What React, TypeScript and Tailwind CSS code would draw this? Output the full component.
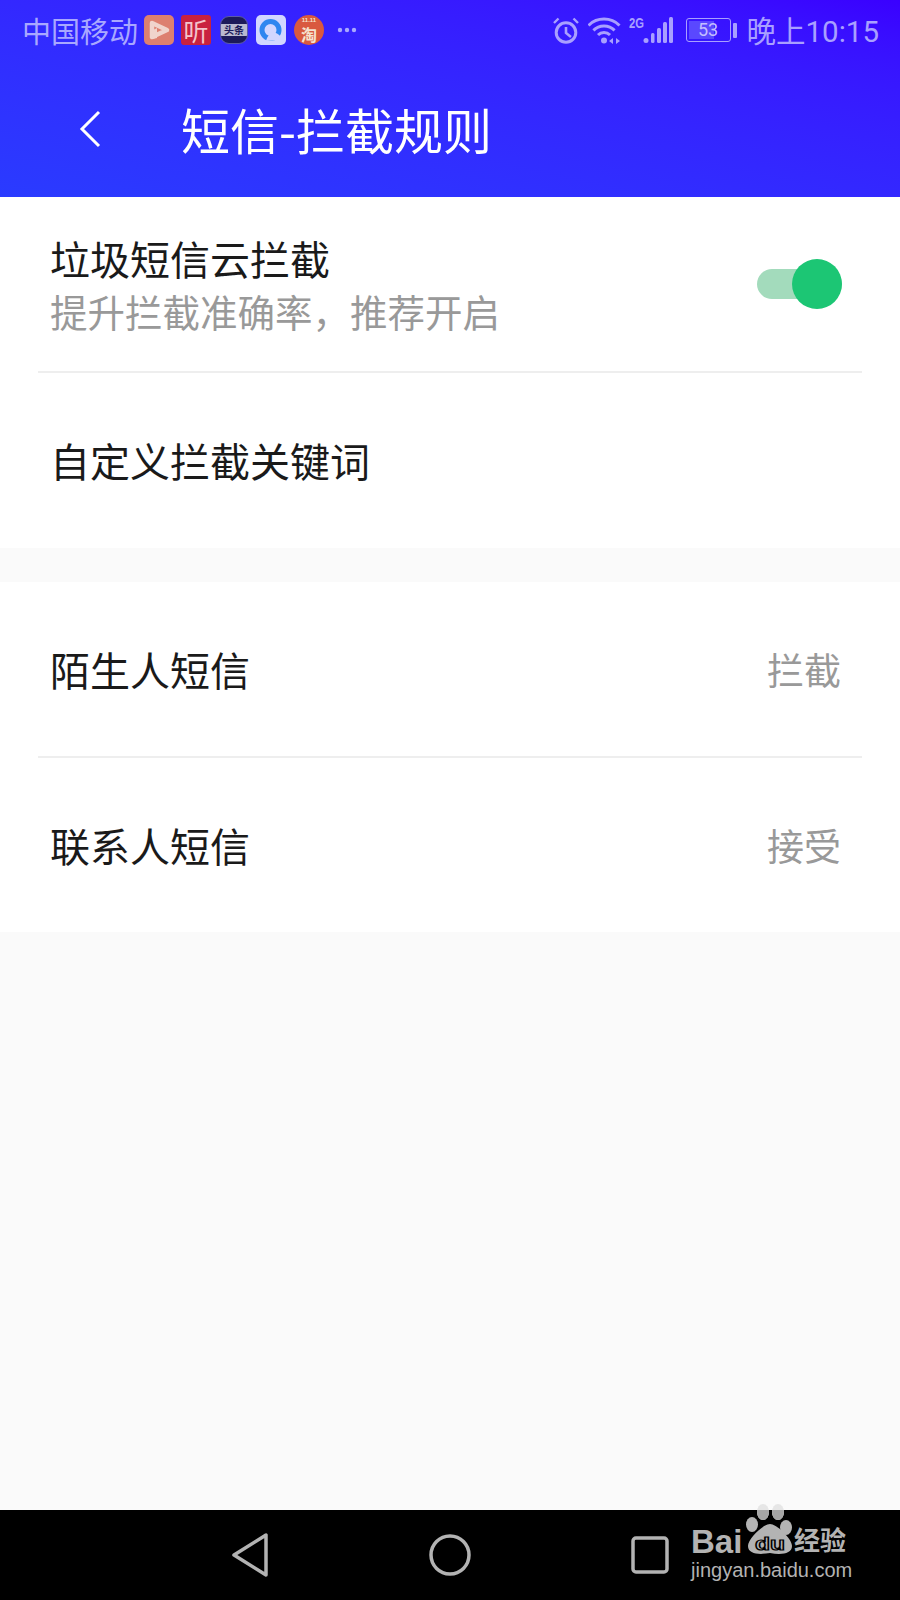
import React from "react";

const cjk = "font-['Noto_Sans_CJK_SC','Noto_Sans',sans-serif]";

function Row({ title, value, tall }: { title: string; value?: string; tall?: boolean }) {
  return (
    <div className={`flex items-center justify-between pl-[50px] pr-[59px] ${tall ? "h-[175px] pb-[2px]" : "h-[174px]"}`}>
      <span className="text-[40px] leading-[48px] text-[#1a1a1a]">{title}</span>
      {value && <span className="text-[37px] leading-[48px] text-[#999999]">{value}</span>}
    </div>
  );
}

function Divider() {
  return <div className="mx-[38px] h-[2px] bg-[#eeeeee]" />;
}

function StatusLeft() {
  const c = "#a9a8ff";
  return (
    <div className="flex items-center">
      <span className="text-[29px] leading-[40px] text-[#a9a8ff]">中国移动</span>
      <div className="ml-[6px] flex h-[30px] w-[30px] items-center justify-center rounded-[5px] bg-[#dd8070]">
        <svg width="30" height="30" viewBox="0 0 30 30" fill="none">
          <path d="M8 8 L23 15 L8 22 Z" stroke="#f0d4cc" strokeWidth="4.5" strokeLinejoin="round" />
          <path d="M9 15 L13 13 V23 L9 24 Z" fill="#f0d4cc" />
        </svg>
      </div>
      <div className="ml-[7px] flex h-[30px] w-[30px] items-center justify-center rounded-[3px] bg-[#c9213f] text-[25px] leading-[30px] text-[#f3c4cc]">听</div>
      <div className="ml-[9px] flex h-[28px] w-[28px] items-center justify-center overflow-hidden rounded-[9px] border border-[#5b5ba8] bg-[#1c1a5a]">
        <div className="flex h-[12px] w-full items-center justify-center bg-[#b9b9cf] text-[10px] font-bold leading-[12px] text-[#1c1a5a]">头条</div>
      </div>
      <div className="ml-[8px] flex h-[30px] w-[30px] items-center justify-center rounded-[5px] bg-[#d2d6ff]">
        <svg width="30" height="30" viewBox="0 0 30 30" fill="none">
          <circle cx="14.5" cy="15" r="8.5" stroke="#2f86f0" strokeWidth="5" />
          <path d="M10 26 C13 16 20 14 27 25 Z" fill="#d2d6ff" />
        </svg>
      </div>
      <div className="ml-[8px] flex h-[30px] w-[30px] flex-col items-center justify-center rounded-full bg-[#d9593f] text-[#f5e3d0]">
        <span className="font-['Liberation_Sans',sans-serif] text-[6px] font-bold leading-[8px]">11.11</span>
        <span className="text-[16px] font-bold leading-[20px]">淘</span>
      </div>
      <svg className="ml-[13px]" width="20" height="6" viewBox="0 0 20 6">
        <circle cx="3" cy="3" r="2.2" fill={c} />
        <circle cx="10" cy="3" r="2.2" fill={c} />
        <circle cx="17" cy="3" r="2.2" fill={c} />
      </svg>
    </div>
  );
}

function StatusRight() {
  const c = "#a9a0ff";
  return (
    <div className="flex items-center">
      <svg width="26" height="27" viewBox="0 0 26 27" fill="none" stroke={c}>
        <circle cx="13" cy="15.5" r="9.8" strokeWidth="3" />
        <path d="M13 10 V16 L18 20" strokeWidth="2.6" />
        <path d="M1 6 L5.5 1.5 M25 6 L20.5 1.5" strokeWidth="2.4" />
      </svg>
      <svg className="ml-[9px]" width="33" height="27" viewBox="0 0 33 27" fill="none" stroke={c}>
        <path d="M0.5 8.5 A22 22 0 0 1 31.5 8.5" strokeWidth="3" />
        <path d="M5.4 13.4 A15 15 0 0 1 26.6 13.4" strokeWidth="3" />
        <path d="M10 18 A8.5 8.5 0 0 1 22 18" strokeWidth="3" />
        <circle cx="16" cy="23.5" r="3" fill={c} stroke="none" />
        <path d="M21 24 L25 21 V27 Z M28 21 L32 24 L28 27 Z" fill={c} stroke="none" />
      </svg>
      <svg className="ml-[8px]" width="44" height="34" viewBox="0 -4 44 34" fill={c}>
        <text x="0" y="11" fontSize="15" fontWeight="700" fontFamily="Liberation Sans" textLength="15" lengthAdjust="spacingAndGlyphs">2G</text>
        <circle cx="17" cy="23.5" r="2.5" />
        <rect x="22" y="16" width="3.5" height="10" rx="1.5" />
        <rect x="28" y="11" width="4" height="15" rx="1.5" />
        <rect x="34" y="5" width="4" height="21" rx="1.5" />
        <rect x="40" y="0" width="4" height="26" rx="1.5" />
      </svg>
      <div className="ml-[13px] flex h-[24px] w-[45px] items-center justify-center rounded-[3px] border border-[#a9a0ff] bg-[linear-gradient(90deg,#5a48ff_62%,transparent_62%)] bg-clip-content p-[2px]">
        <span className="font-['Roboto',sans-serif] text-[18px] leading-[18px] text-[#c4beff]">53</span>
      </div>
      <div className="ml-[2px] h-[15px] w-[4px] rounded-[1px] bg-[#a9a0ff]" />
      <span className="ml-[10px] text-[29.5px] leading-[40px] text-[#a9a0ff]">
        晚上<span className="font-['Roboto',sans-serif]">10:15</span>
      </span>
    </div>
  );
}

function Baidu() {
  return (
    <div className="absolute left-[691px] top-[1503px] flex w-[170px] flex-col items-start text-[#b3b3b3]">
      <div className="flex h-[52px] items-end">
        <span className="mb-[-3px] w-[51px] font-['Liberation_Sans',sans-serif] text-[33px] font-bold leading-[32px]">Bai</span>
        <svg className="ml-[4px]" width="47" height="52" viewBox="0 0 47 52">
          <defs>
            <clipPath id="navPart">
              <rect x="0" y="7" width="47" height="45" />
            </clipPath>
          </defs>
          <ellipse cx="17" cy="9" rx="6" ry="8" fill="#e6e6e6" />
          <ellipse cx="32" cy="9" rx="6" ry="8" fill="#e6e6e6" />
          <g clipPath="url(#navPart)" fill="#a6a6a6">
            <ellipse cx="17" cy="9" rx="6" ry="8" />
            <ellipse cx="32" cy="9" rx="6" ry="8" />
          </g>
          <ellipse cx="6" cy="21.5" rx="6" ry="7.5" fill="#b3b3b3" />
          <ellipse cx="40" cy="24.5" rx="6" ry="7.5" fill="#b3b3b3" />
          <path d="M24 21 C31 21 46 36 46 43 C46 51 35 52 24 50 C13 52 2 51 2 43 C2 36 17 21 24 21 Z" fill="#b3b3b3" />
          <text x="9" y="47" fontSize="18" fontWeight="700" fontFamily="Liberation Sans" textLength="30" lengthAdjust="spacingAndGlyphs" fill="#b3b3b3" stroke="#000" strokeWidth="1.2">du</text>
        </svg>
        <span className="ml-[1px] mb-[0px] text-[26px] font-bold leading-[32px]">经验</span>
      </div>
      <span className="mt-[3px] font-['Liberation_Sans',sans-serif] text-[20px] leading-[24px]">jingyan.baidu.com</span>
    </div>
  );
}

export default function App() {
  return (
    <div className={`relative flex h-[1600px] w-[900px] flex-col overflow-hidden bg-[#fafafa] ${cjk}`}>
      <header className="flex h-[197px] shrink-0 flex-col bg-gradient-to-tr from-[#2a3bff] to-[#3a00ff] pl-[22px] pr-[21px]">
        <div className="flex h-[60px] items-center justify-between">
          <StatusLeft />
          <StatusRight />
        </div>
        <div className="flex flex-1 items-center">
          <svg className="ml-[56px]" width="24" height="40" viewBox="0 0 24 40" fill="none" stroke="#ffffff" strokeWidth="3">
            <path d="M21 3 L4 20 L21 37" />
          </svg>
          <h1 className="ml-[79px] text-[49px] font-normal leading-[56px] text-white">短信-拦截规则</h1>
        </div>
      </header>

      <section className="bg-white">
        <div className="flex h-[174px] items-center justify-between pl-[50px] pr-[58px]">
          <div className="flex flex-col gap-[3px]">
            <span className="text-[40px] leading-[50px] text-[#1a1a1a]">垃圾短信云拦截</span>
            <span className="text-[37.5px] leading-[50px] text-[#999999]">提升拦截准确率，推荐开启</span>
          </div>
          <div className="relative h-[30px] w-[85px] rounded-full bg-[#a3dbbc]">
            <div className="absolute right-0 top-[-10px] h-[50px] w-[50px] rounded-full bg-[#1cc674]" />
          </div>
        </div>
        <Divider />
        <Row title="自定义拦截关键词" tall />
      </section>

      <section className="mt-[34px] bg-white">
        <Row title="陌生人短信" value="拦截" />
        <Divider />
        <Row title="联系人短信" value="接受" />
      </section>

      <div className="flex-1" />

      <nav className="flex h-[90px] shrink-0 items-center bg-black pl-[232px]">
        <svg width="36" height="44" viewBox="0 0 36 44" fill="none" stroke="#b3b3b3" strokeWidth="3.5" strokeLinejoin="round">
          <path d="M34 2 V42 L2 22 Z" />
        </svg>
        <svg className="ml-[161px]" width="42" height="42" viewBox="0 0 42 42" fill="none" stroke="#b3b3b3" strokeWidth="3.5">
          <circle cx="21" cy="21" r="19" />
        </svg>
        <svg className="ml-[160px]" width="38" height="38" viewBox="0 0 38 38" fill="none" stroke="#b3b3b3" strokeWidth="3.5" strokeLinejoin="round">
          <rect x="2" y="2" width="34" height="34" rx="3" />
        </svg>
      </nav>
      <Baidu />
    </div>
  );
}
